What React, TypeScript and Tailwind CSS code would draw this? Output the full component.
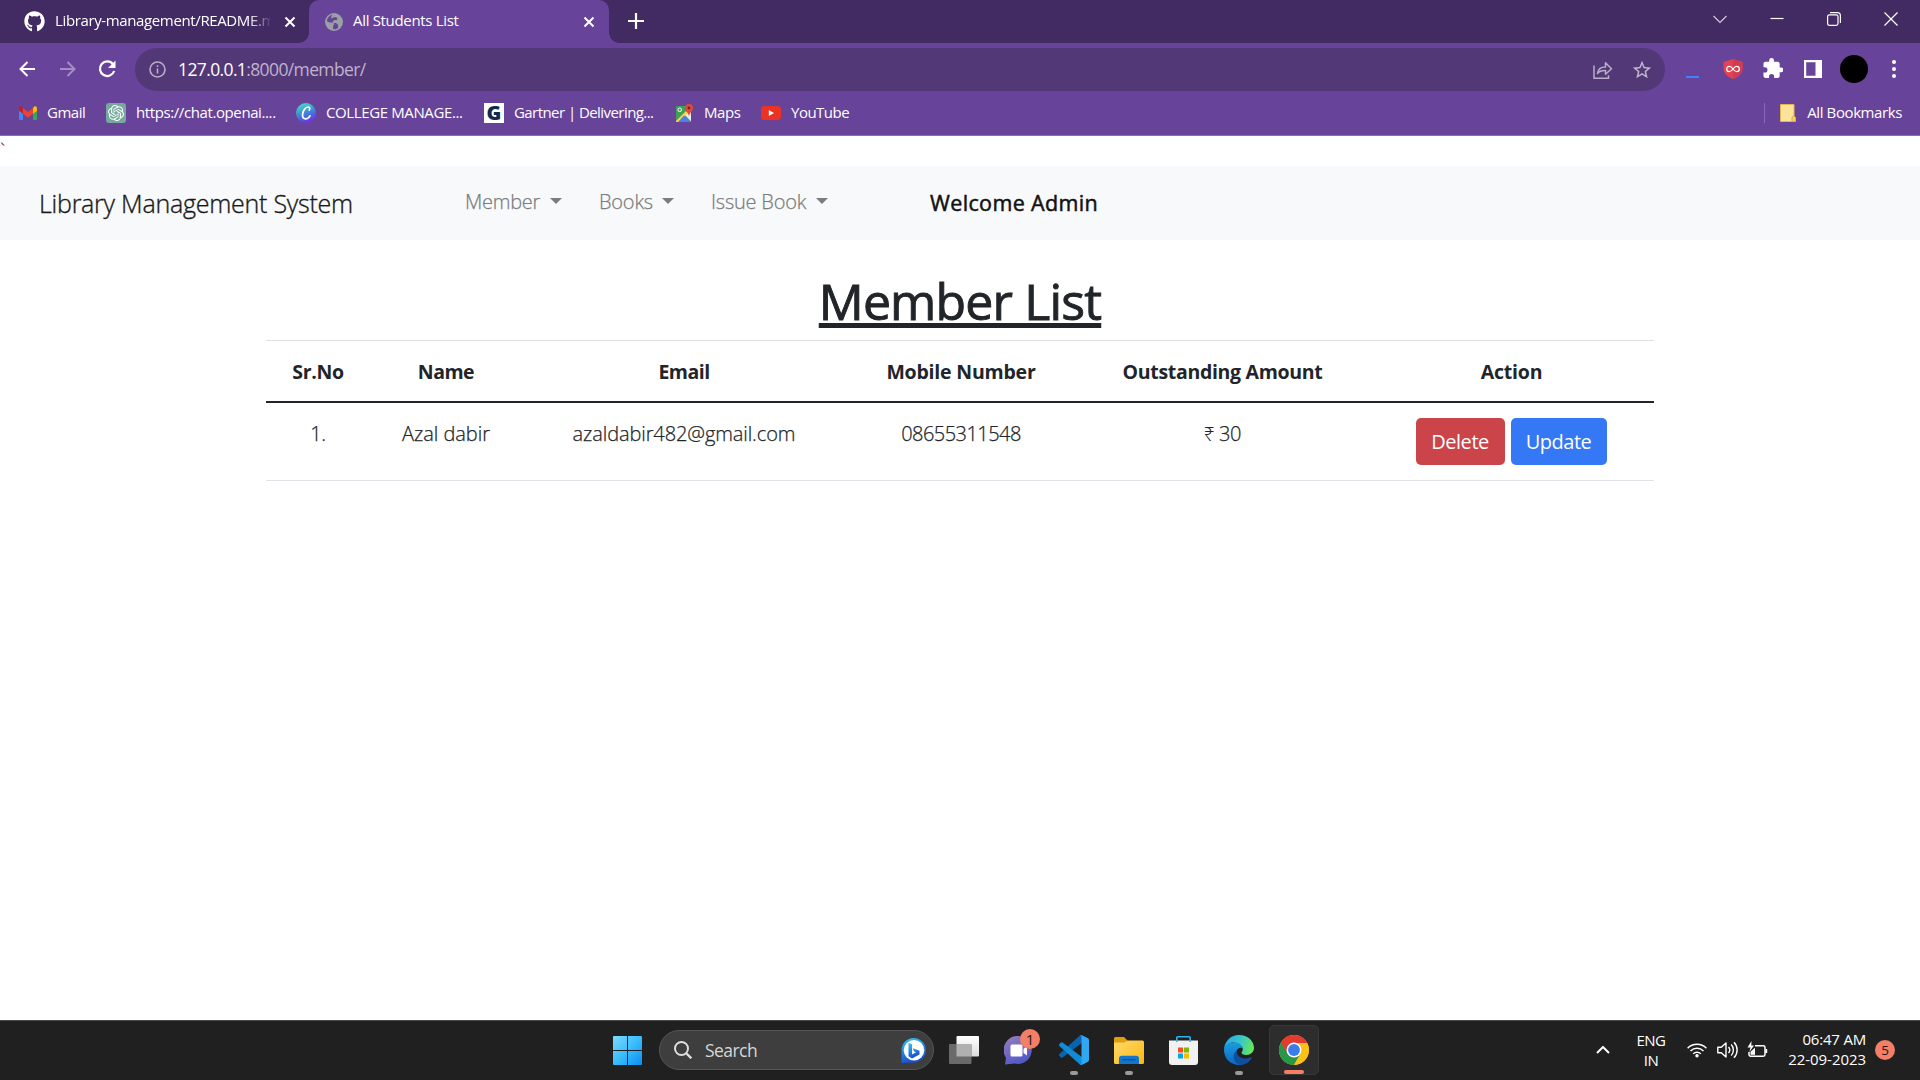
import React from "react";
import { FaGithub } from "react-icons/fa";
import { SiOpenai } from "react-icons/si";

function CloseX({ className = "" }: { className?: string }) {
  return (
    <svg viewBox="0 0 12 12" className={`h-3 w-3 shrink-0 ${className}`} fill="none" stroke="#fff" strokeWidth="2">
      <path d="M1.5 1.5l9 9M10.5 1.5l-9 9" />
    </svg>
  );
}

function TabStrip() {
  return (
    <div className="flex h-[43px] bg-[#422a63]">
      <div className="flex h-[43px] w-[309px] items-center rounded-br-[10px] pl-6">
        <FaGithub className="h-[21px] w-[21px] shrink-0 text-white" />
        <div className="ml-[10px] w-[215px] whitespace-nowrap pb-[3px] text-[15px] leading-[40px] tracking-[-0.37px] text-white [mask-image:linear-gradient(to_right,black_90%,transparent_101%)]">
          Library-management/README.m
        </div>
        <CloseX className="ml-[14px]" />
      </div>
      <div className="relative flex h-[43px] w-[300px] items-center rounded-t-[10px] bg-[#68439a] pl-4">
        <span className="absolute -left-[10px] bottom-0 h-[10px] w-[10px] bg-[radial-gradient(circle_at_0_0,#422a63_9.5px,#68439a_10px)]" />
        <span className="absolute -right-[10px] bottom-0 h-[10px] w-[10px] bg-[radial-gradient(circle_at_100%_0,#422a63_9.5px,#68439a_10px)]" />
        <svg viewBox="0 0 18 18" className="h-[18px] w-[18px]">
          <circle cx="9" cy="9" r="9" fill="#9aa0a6" />
          <path
            d="M7.5 1.8c-3 .7-5.4 3-5.6 6.4l2.6 1.2h3.2l1.8 1.7-1.4 1.5v3.5c2 .3 3.7-.2 5.200-1.400l-.4-3.300-2-1.500h-2.200l-1-1.200 1.500-1.700 2.200.2 1.100-1.500-.700-1.300-2.400-.4-2.700 1.500L6 4.300z"
            fill="#68439a"
          />
        </svg>
        <span className="ml-[10px] w-[225px] pb-[3px] text-[15px] leading-[40px] tracking-[-0.32px] text-white">All Students List</span>
        <CloseX className="ml-[5px]" />
      </div>
      <svg viewBox="0 0 16 16" className="ml-[19px] mt-[13px] h-4 w-4" stroke="#fff" strokeWidth="2.2">
        <path d="M8 0v16M0 8h16" />
      </svg>
      <div className="ml-auto mr-[22px] flex h-[37px] items-center gap-[43px]">
        <svg viewBox="0 0 14 14" className="h-[14px] w-[14px]" fill="none" stroke="#d6cfe0" strokeWidth="1.1">
          <path d="M.5 4L7 10.500 13.500 4" />
        </svg>
        <svg viewBox="0 0 14 14" className="h-[14px] w-[14px]" stroke="#fff" strokeWidth="1.200">
          <path d="M.5 6.500h13" />
        </svg>
        <svg viewBox="0 0 14 14" className="h-[14px] w-[14px]" fill="none" stroke="#fff" strokeWidth="1.200">
          <rect x=".6" y="2.900" width="10.400" height="10.400" rx="1.800" />
          <path d="M3 .6h7.400a3 3 0 0 1 3 3V11" />
        </svg>
        <svg viewBox="0 0 14 14" className="h-[14px] w-[14px]" fill="none" stroke="#fff" strokeWidth="1.200">
          <path d="M.5.5l13 13M13.500.5l-13 13" />
        </svg>
      </div>
    </div>
  );
}

function Toolbar() {
  return (
    <div className="flex h-[53px] items-center pl-[19px]">
      <svg viewBox="0 0 16 16" className="mb-[2px] h-4 w-4" fill="none" stroke="#fff" strokeWidth="2">
        <path d="M16 8H1.500M8.500 1L1.500 8l7 7" />
      </svg>
      <svg viewBox="0 0 16 16" className="mb-[2px] ml-[25px] h-4 w-4" fill="none" stroke="#a48dc4" strokeWidth="2">
        <path d="M0 8h14.500M7.500 1l7 7-7 7" />
      </svg>
      <svg viewBox="0 0 18 18" className="mb-[2px] ml-[22px] h-[18px] w-[18px]">
        <path d="M15 4.200A7.300 7.300 0 1 0 16.200 11" fill="none" stroke="#fff" strokeWidth="2.200" />
        <path d="M17.500 0.500v7.500H10z" fill="#fff" />
      </svg>
      <div className="ml-[19px] flex h-[43px] w-[1530px] items-center rounded-full bg-[#533877] pl-[14px] pr-[12px]">
        <svg viewBox="0 0 17 17" className="h-[17px] w-[17px]" fill="none" stroke="#b9adc8" strokeWidth="1.600">
          <circle cx="8.500" cy="8.500" r="7.500" />
          <path d="M8.500 7.600v5M8.500 4.300v1.800" />
        </svg>
        <span className="ml-[12px] text-[17.5px] leading-[43px] tracking-[-0.62px] text-[#bfb2cd]">
          <span className="text-white">127.0.0.1</span>:8000/member/
        </span>
        <svg viewBox="0 0 20 18" className="ml-auto h-[18px] w-5" fill="none" stroke="#b9adc8" strokeWidth="1.500">
          <path d="M1 4.500v12.700h14.500v-3" />
          <path d="M4.500 12.500c.5-4.500 3.500-6.500 8-6.500V1.700l6 6-6 5.600V9.500c-3.500-.2-6 .6-8 3z" strokeLinejoin="round" />
        </svg>
        <svg viewBox="0 0 24 24" className="ml-[18px] h-[22px] w-[22px]" fill="#c3b9cf">
          <path d="M22 9.240l-7.190-.62L12 2 9.190 8.630 2 9.240l5.460 4.730L5.820 21 12 17.270 18.180 21l-1.630-7.030L22 9.240zM12 15.400l-3.760 2.270 1-4.280-3.320-2.880 4.380-.38L12 6.100l1.710 4.040 4.380.38-3.320 2.880 1 4.280L12 15.400z" />
        </svg>
      </div>
      <span className="ml-[21px] mt-[15px] h-[2px] w-[13px] bg-[#3f83f8]" />
      <svg viewBox="0 0 20 20" className="mb-[2px] ml-[24px] h-5 w-5">
        <path d="M10 0l9.500 3v6.500c0 5-4.500 8.800-9.500 10.500C5 18.300.5 14.500.5 9.500V3z" fill="#e04352" />
        <path d="M10 0l9.500 3v6.500c0 5-4.500 8.800-9.500 10.500z" fill="#cf3d4f" />
        <path d="M10 10C8.800 8.200 7.600 7.400 6.300 7.400a2.600 2.600 0 0 0 0 5.200c1.300 0 2.500-.8 3.700-2.600s2.400-2.600 3.700-2.600a2.600 2.600 0 0 1 0 5.200c-1.300 0-2.500-.8-3.700-2.600z" fill="none" stroke="#fff" strokeWidth="1.200" />
      </svg>
      <svg viewBox="1.500 1 21 21" className="mb-[3px] ml-[20px] h-[20px] w-[20px]" fill="#fff">
        <path d="M20.500 11H19V7c0-1.100-.9-2-2-2h-4V3.500a2.500 2.500 0 0 0-5 0V5H4c-1.100 0-1.990.9-1.990 2v3.800H3.500a2.700 2.700 0 0 1 0 5.400H2V20c0 1.100.9 2 2 2h3.800v-1.500a2.700 2.700 0 0 1 5.400 0V22H17c1.100 0 2-.9 2-2v-4h1.500a2.500 2.500 0 0 0 0-5z" />
      </svg>
      <svg viewBox="0 0 18 18" className="mb-[1px] ml-[21px] h-[18px] w-[18px]">
        <path fillRule="evenodd" d="M0 0h18v18H0zM2.200 2.200v13.600H11.500V2.200z" fill="#fff" />
      </svg>
      <span className="mb-[1px] ml-[18px] h-7 w-7 rounded-full bg-black" />
      <svg viewBox="0 0 4 18" className="mb-[2px] ml-[23.5px] h-[18px] w-1" fill="#fff">
        <circle cx="2" cy="2" r="2" />
        <circle cx="2" cy="9" r="2" />
        <circle cx="2" cy="16" r="2" />
      </svg>
    </div>
  );
}

function Bookmark({ icon, label, width, spacing }: { icon: React.ReactNode; label: string; width: string; spacing: string }) {
  return (
    <div className={`flex shrink-0 items-center gap-[10px] ${width}`}>
      <span className="flex h-5 w-5 shrink-0 items-center justify-center">{icon}</span>
      <span className={`whitespace-nowrap pb-[2px] text-[15px] leading-[32px] text-white ${spacing}`}>{label}</span>
    </div>
  );
}

function BookmarksBar() {
  return (
    <div className="flex h-[40px] items-start border-b border-[#8b6bb5] pl-[18px]">
      <Bookmark
        width="w-[88px]"
        spacing="-ml-px tracking-[-0.5px]"
        label="Gmail"
        icon={
          <svg viewBox="0 0 18 14" className="h-[14px] w-[18px]">
            <path d="M0 2v11a1 1 0 0 0 1 1h3V5z" fill="#4285f4" />
            <path d="M18 2v11a1 1 0 0 1-1 1h-3V5z" fill="#34a853" />
            <path d="M0 2.200v2.600l4 3V2L3 .8C1.800-.3 0 .5 0 2.200z" fill="#c5221f" />
            <path d="M18 2.200v2.600l-4 3V2l1-1.200c1.200-1.100 3-.3 3 1.400z" fill="#fbbc04" />
            <path d="M4 2v5.800l5 3.900 5-3.900V2L9 6z" fill="#ea4335" />
          </svg>
        }
      />
      <Bookmark
        width="w-[190px]"
        spacing="tracking-[-0.4px]"
        label="https://chat.openai...."
        icon={
          <span className="flex h-5 w-5 items-center justify-center rounded-[3px] bg-[#75a99c]">
            <SiOpenai className="h-4 w-4 text-white" />
          </span>
        }
      />
      <Bookmark
        width="w-[188px]"
        spacing="tracking-[-0.38px]"
        label="COLLEGE MANAGE..."
        icon={
          <span className="flex h-5 w-5 items-center justify-center rounded-full bg-[linear-gradient(160deg,#45cfc4_15%,#3f86d8_50%,#6a2be8_90%)]">
            <svg viewBox="0 0 20 20" className="h-5 w-5" fill="none" stroke="#fff" strokeLinecap="round">
              <path d="M13.300 7.200c.8-1.700.6-3.200-1-3.200-2.900 0-5.800 4.200-5.800 8 0 2.400 1.200 3.800 3 3.800 1.900 0 3.500-1.200 4.500-3" strokeWidth="1.700" />
            </svg>
          </span>
        }
      />
      <Bookmark
        width="w-[191px]"
        spacing="tracking-[-0.56px]"
        label="Gartner | Delivering..."
        icon={
          <span className="flex h-5 w-5 items-center justify-center bg-white font-['Open_Sans'] text-[20px] font-extrabold leading-none text-[#12284c]">
            G
          </span>
        }
      />
      <Bookmark
        width="-ml-px w-[87px]"
        spacing="tracking-[-0.4px]"
        label="Maps"
        icon={
          <svg viewBox="0 0 18 18" className="h-[18px] w-[18px]">
            <rect x="1" y="2" width="15" height="16" rx="1" fill="#3f9e57" />
            <path d="M9 10l7-5v12.500L9 10z" fill="#e8eaed" />
            <path d="M1 17L11 7l2 2-9 9H1z" fill="#fbd34d" />
            <path d="M3 18l6-6.500L15.500 18z" fill="#4a80f0" />
            <circle cx="4.700" cy="5.800" r="1.800" fill="none" stroke="#fff" strokeWidth="1" />
            <path d="M14 0a4 4 0 0 0-4 4c0 3 3 4 4 8 1-4 4-5 4-8a4 4 0 0 0-4-4z" fill="#dd4b3e" />
            <circle cx="14" cy="4" r="1.400" fill="#7b231e" />
          </svg>
        }
      />
      <Bookmark
        width="w-[120px]"
        spacing="tracking-[-0.5px]"
        label="YouTube"
        icon={
          <svg viewBox="0 0 20 14" className="h-[14px] w-5">
            <rect width="20" height="14" rx="3.500" fill="#ea3323" />
            <path d="M7.800 4v6l5.200-3z" fill="#fff" />
          </svg>
        }
      />
      <div className="ml-auto mr-[18px] flex h-[34px] items-center">
        <span className="h-5 w-px bg-[#8b6bb5]" />
        <svg viewBox="0 0 16 18" className="ml-[15px] h-[18px] w-4">
          <path d="M.5.5h13.500v11.500l1.500 1.500v4H.5z" fill="#fbe39a" stroke="#e0b94e" />
          <path d="M12 17.500v-4.500l1.500-1.200 2 1.700v4z" fill="#f5d06a" stroke="#d9ae3c" />
        </svg>
        <span className="ml-[11px] pb-[2px] text-[15px] leading-[32px] tracking-[-0.4px] text-white">All Bookmarks</span>
      </div>
    </div>
  );
}

function NavItem({ label, spacing, className }: { label: string; spacing: string; className: string }) {
  return (
    <div className={`flex items-center text-[20px] font-light leading-[30px] text-[#7b7c7d] [-webkit-text-stroke:0.25px] ${className}`}>
      <span className={`whitespace-nowrap ${spacing}`}>{label}</span>
      <span className="mb-[3px] ml-auto border-x-[6px] border-t-[6px] border-x-transparent border-t-[#7b7c7d]" />
    </div>
  );
}

function Navbar() {
  return (
    <nav className="flex h-[74px] bg-[#f8f9fa] pl-[39px]">
      <span className="mt-[19px] w-[426px] text-[25px] font-light leading-[37px] tracking-[-0.24px] text-[#181818] [-webkit-text-stroke:0.35px]">
        Library Management System
      </span>
      <NavItem label="Member" spacing="tracking-[-0.25px]" className="mt-[21px] h-[30px] w-[97px]" />
      <NavItem label="Books" spacing="tracking-[-0.2px]" className="ml-[37px] mt-[21px] h-[30px] w-[75px]" />
      <NavItem label="Issue Book" spacing="tracking-[-0.22px]" className="ml-[37px] mt-[21px] h-[30px] w-[117px]" />
      <span className="ml-[102px] mt-[21px] text-[21.5px] leading-[32px] tracking-[0.36px] text-[#121212] [-webkit-text-stroke:0.5px]">
        Welcome Admin
      </span>
    </nav>
  );
}

const headers = [
  { label: "Sr.No", spacing: "tracking-[-0.35px]" },
  { label: "Name", spacing: "tracking-[-0.5px]" },
  { label: "Email", spacing: "tracking-[-0.5px]" },
  { label: "Mobile Number", spacing: "tracking-[-0.2px]" },
  { label: "Outstanding Amount", spacing: "tracking-[-0.32px]" },
  { label: "Action", spacing: "tracking-[-0.2px]" },
];

function MemberTable() {
  return (
    <table className="w-[1388px] table-fixed border-separate border-spacing-0 text-center text-[20px] leading-[30px] text-[#212529]">
      <colgroup>
        <col className="w-[104px]" />
        <col className="w-[152px]" />
        <col className="w-[324px]" />
        <col className="w-[230px]" />
        <col className="w-[293px]" />
        <col className="w-[285px]" />
      </colgroup>
      <thead>
        <tr>
          {headers.map((h) => (
            <th key={h.label} className={`border-t border-b-2 border-t-[#dee2e6] border-b-[#212529] pb-[14px] pt-[16px] text-[19.5px] font-bold ${h.spacing}`}>
              {h.label}
            </th>
          ))}
        </tr>
      </thead>
      <tbody className="font-light [&>tr>td]:border-b [&>tr>td]:border-[#dee2e6] [&>tr>td]:pt-[16px] [&>tr>td]:align-top [-webkit-text-stroke:0.25px]">
        <tr>
          <td className="tracking-[-0.4px]">1.</td>
          <td className="tracking-[-0.05px]">Azal dabir</td>
          <td className="tracking-[-0.1px]">azaldabir482@gmail.com</td>
          <td className="tracking-[-0.55px]">08655311548</td>
          <td className="tracking-[-0.4px]">
            <span className="font-['Noto_Sans'] text-[19px] font-light [-webkit-text-stroke:0]">₹</span> 30
          </td>
          <td>
            <div className="-mt-px mb-[15px] flex justify-center gap-[6px] pr-[1px] font-normal text-white [-webkit-text-stroke:0]">
              <button className="h-[47px] w-[89px] rounded-[5px] bg-[#cb444a] tracking-[-0.45px]">Delete</button>
              <button className="h-[47px] w-[96px] rounded-[5px] bg-[#3478f6] tracking-[-0.5px]">Update</button>
            </div>
          </td>
        </tr>
      </tbody>
    </table>
  );
}

function AppSlot({ children, indicator = false }: { children: React.ReactNode; indicator?: boolean }) {
  return (
    <div className="relative flex h-[60px] w-[55px] items-center justify-center">
      {children}
      {indicator && <span className="absolute bottom-[5px] h-1 w-2 rounded-full bg-[#9a9a9a]" />}
    </div>
  );
}

function Taskbar() {
  return (
    <footer className="flex h-[60px] items-center border-t border-[#4a4a4a] bg-[#202020] pb-[1px] font-['Open_Sans',sans-serif] text-white">
      <svg viewBox="0 0 29 29" className="ml-[613px] h-[29px] w-[29px]">
        <defs>
          <linearGradient id="win" x1="0" y1="0" x2="1" y2="1">
            <stop offset="0" stopColor="#7ddcff" />
            <stop offset=".5" stopColor="#39bdfb" />
            <stop offset="1" stopColor="#0a8df3" />
          </linearGradient>
        </defs>
        <path d="M1 0h13v14H0V1a1 1 0 0 1 1-1zM15 0h13a1 1 0 0 1 1 1v13H15zM0 15h14v14H1a1 1 0 0 1-1-1zM15 15h14v13a1 1 0 0 1-1 1H15z" fill="url(#win)" />
      </svg>
      <div className="ml-[17px] flex h-10 w-[275px] items-center rounded-full border border-[#555] bg-[#3e3e3e] pl-[14px] pr-[7px]">
        <svg viewBox="0 0 18 18" className="h-[18px] w-[18px]" fill="none" stroke="#dedede" strokeWidth="2">
          <circle cx="7.500" cy="7.500" r="6.500" />
          <path d="M12 12l5.300 5.300" strokeWidth="2.400" />
        </svg>
        <span className="ml-[13px] text-[17.5px] leading-[38px] tracking-[-0.55px] text-[#d6d6d6]">Search</span>
        <svg viewBox="0 0 25 25" className="ml-auto h-[25px] w-[25px]">
          <defs>
            <linearGradient id="bing" x1="0" y1="0" x2=".3" y2="1">
              <stop offset="0" stopColor="#2fc7ee" />
              <stop offset="1" stopColor="#1b4fd0" />
            </linearGradient>
          </defs>
          <path d="M12.500 0a12.300 12.300 0 1 1-1.500 24.500L.5 25V12A12.300 12.300 0 0 1 12.500 0z" fill="url(#bing)" />
          <circle cx="13" cy="12.300" r="10.300" fill="#fff" />
          <path d="M7.500 5l3.500 1.200v10.300l4-2.200-2-1-1.200-3 6.700 2.400v3.800L11 20.500 7.500 18.300z" fill="url(#bing)" />
        </svg>
      </div>
      <div className="ml-[2.500px] flex">
        <AppSlot>
          <svg viewBox="0 0 30 28" className="h-7 w-[30px]">
            <defs>
              <linearGradient id="tv" x1="0" y1="0" x2="0" y2="1">
                <stop offset="0" stopColor="#fff" />
                <stop offset="1" stopColor="#dcdcdc" />
              </linearGradient>
            </defs>
            <rect x="7.500" y="0" width="22.500" height="20.500" rx="1" fill="url(#tv)" />
            <rect x="0" y="8" width="22.500" height="20" rx="1" fill="#6a6a6a" />
            <path d="M7.500 8h15v12.500h-15z" fill="#b0b0b0" />
          </svg>
        </AppSlot>
        <AppSlot>
          <svg viewBox="0 0 29 29" className="mr-px h-[29px] w-[29px]">
            <defs>
              <linearGradient id="chat" x1="0" y1="0" x2=".5" y2="1">
                <stop offset="0" stopColor="#9a7dbb" />
                <stop offset="1" stopColor="#5059c9" />
              </linearGradient>
            </defs>
            <path d="M14.500 0a14 14 0 1 1-4 27.600L1 28.500l1-6.800A14 14 0 0 1 14.500 0z" fill="url(#chat)" />
            <rect x="6.500" y="8.500" width="12" height="12" rx="1.500" fill="#fff" />
            <path d="M19.500 13l3.500-3.500v10L19.500 17z" fill="#fff" />
          </svg>
          <span className="absolute left-[28.500px] top-[9px] flex h-5 w-5 items-center justify-center rounded-full bg-[#f47e66] text-[15px] leading-5 text-[#1c1c1c]">1</span>
        </AppSlot>
        <AppSlot indicator>
          <svg viewBox="0 0 100 100" className="h-[30px] w-[30px]">
            <path d="M96.500 10.800L75.900.9a6.200 6.200 0 0 0-7.100 1.200L1.300 63.500a4.200 4.200 0 0 0 0 6.200l5.500 5a4.200 4.200 0 0 0 5.300.2L75 27.300z" fill="#0a64ad" />
            <path d="M96.500 89.200L75.900 99.100a6.200 6.200 0 0 1-7.100-1.200L1.300 36.500a4.200 4.200 0 0 1 0-6.200l5.500-5a4.200 4.200 0 0 1 5.300-.2L75 72.700z" fill="#118bd5" />
            <path d="M75.900 99.100a6.200 6.200 0 0 1-7.100-1.200c2.300 2.300 6.200.7 6.200-2.600V4.700c0-3.300-3.900-4.900-6.200-2.600A6.200 6.200 0 0 1 75.900.9l20.600 9.900a6.200 6.200 0 0 1 3.500 5.600v67.200a6.200 6.200 0 0 1-3.500 5.600z" fill="#2fa8f1" />
          </svg>
        </AppSlot>
        <AppSlot indicator>
          <svg viewBox="0 0 30 27" className="h-[27px] w-[30px]">
            <defs>
              <linearGradient id="fold" x1="0" y1="0" x2="1" y2="1">
                <stop offset="0" stopColor="#ffd96c" />
                <stop offset="1" stopColor="#fbb813" />
              </linearGradient>
            </defs>
            <path d="M0 1.500A1.500 1.500 0 0 1 1.500 0H10l3.500 3.500L10 9H0z" fill="#e09d0c" />
            <path d="M0 5.500h10.500L13.500 3.500h15A1.500 1.500 0 0 1 30 5v20.500a1.500 1.500 0 0 1-1.500 1.500h-27A1.500 1.500 0 0 1 0 25.500z" fill="url(#fold)" />
            <path d="M5 27v-5.500A2.800 2.800 0 0 1 7.800 18.700h14.400a2.800 2.800 0 0 1 2.800 2.800V27z" fill="#1177ce" />
            <path d="M8.500 22.700h13" stroke="#0b4d8f" strokeWidth="1.300" />
          </svg>
        </AppSlot>
        <AppSlot>
          <svg viewBox="0 0 29 29" className="mr-px h-[29px] w-[29px]">
            <path d="M0 4.500h29V26a3 3 0 0 1-3 3H3a3 3 0 0 1-3-3z" fill="#f1f1f1" />
            <path d="M7.800 6V1.800A1 1 0 0 1 8.800.8h11.400a1 1 0 0 1 1 1V6" fill="none" stroke="#31b4ee" strokeWidth="1.600" />
            <path d="M9 11.500h5v5H9z" fill="#f25022" />
            <path d="M15 11.500h5v5h-5z" fill="#7fba00" />
            <path d="M9 17.500h5v5H9z" fill="#00a4ef" />
            <path d="M15 17.500h5v5h-5z" fill="#ffb900" />
          </svg>
        </AppSlot>
        <AppSlot indicator>
          <svg viewBox="0 0 30 30" className="h-[30px] w-[30px]">
            <defs>
              <linearGradient id="edgeTop" x1="0" y1=".4" x2="1" y2=".6">
                <stop offset="0" stopColor="#2aa9e6" />
                <stop offset=".5" stopColor="#35c6cf" />
                <stop offset="1" stopColor="#6be84f" />
              </linearGradient>
              <linearGradient id="edgeLeft" x1="0" y1="0" x2="0" y2="1">
                <stop offset="0" stopColor="#1b9de0" />
                <stop offset="1" stopColor="#0967c4" />
              </linearGradient>
            </defs>
            <path d="M0 14.500C.5 6 7 0 15 0c8.800 0 15 6 15 12.800 0 4.500-3.500 7.200-7.500 7.200-3.500 0-5-1.200-5-2.200 0-.8 1.300-1.500 1.300-3.600C18.800 10.500 14 7.500 9.500 7.500 5 7.500 1.500 10 0 14.500z" fill="url(#edgeTop)" />
            <path d="M0 15c0-4.500 4-7.500 9.300-7.500 4.700 0 9 2.500 9.400 6-1-1.800-6.500-1-6.500 4.500 0 6 5.500 9.800 11.300 8.800C21 29 18 30 15 30 6.500 30 0 23.500 0 15z" fill="url(#edgeLeft)" />
            <path d="M12.500 15.500c-5 3.500-3.500 12 3.500 14.400 5.500 0 9.500-3 11.800-6.900.3-.6-.2-1-.8-.7-7 3.200-14.500 0-14.500-6.800z" fill="#104fa0" />
          </svg>
        </AppSlot>
        <div className="relative ml-[2.500px] flex h-[50px] w-[50px] items-center justify-center self-center rounded-[5px] border border-[#383838] bg-[#2d2d2d]">
          <svg viewBox="0 0 48 48" className="h-[30px] w-[30px]">
            <circle cx="24" cy="24" r="24" fill="#fbc116" />
            <path d="M24 24L3.200 12A24 24 0 0 0 24 48l10.400-18z" fill="#279847" />
            <path d="M24 13h21.300A24 24 0 0 0 3.200 12L13.600 30z" fill="#e33b2e" />
            <path d="M34.400 30L24 48A24 24 0 0 0 45.300 13H24z" fill="#fbc116" />
            <circle cx="24" cy="24" r="12" fill="#fff" />
            <circle cx="24" cy="24" r="9.500" fill="#3a7cec" />
          </svg>
          <span className="absolute bottom-0 h-1 w-5 rounded-full bg-[#f47e66]" />
        </div>
      </div>
      <svg viewBox="0 0 14 8" className="ml-auto h-2 w-[14px]" fill="none" stroke="#fff" strokeWidth="2">
        <path d="M1 7l6-6 6 6" />
      </svg>
      <div className="ml-[26px] w-[30px] whitespace-nowrap pb-[1px] text-center text-[15px] leading-5 tracking-[-0.5px]">
        ENG
        <br />
        IN
      </div>
      <svg viewBox="0 0 20 16" className="ml-[21px] h-4 w-5" fill="none" stroke="#fff" strokeWidth="1.500">
        <path d="M.6 6.200a13.300 13.300 0 0 1 18.800 0M3.500 9a9.300 9.300 0 0 1 13 0M6.200 11.700a5.500 5.500 0 0 1 7.600 0" />
        <circle cx="10" cy="13.800" r="1.700" fill="#fff" stroke="none" />
      </svg>
      <svg viewBox="0 0 21 18" className="ml-[10px] h-[18px] w-[21px]" fill="none" stroke="#fff" strokeWidth="1.400">
        <path d="M.8 6.300h3.500L9 2v14l-4.700-4.300H.8z" strokeLinejoin="round" />
        <path d="M11.500 6a4.500 4.500 0 0 1 0 6M14.200 3.500a8 8 0 0 1 0 11M17 1.200a11.300 11.300 0 0 1 0 15.600" />
      </svg>
      <svg viewBox="0 0 21 18" className="ml-[9px] h-[18px] w-[21px]">
        <path d="M8 4.700h8.300A1.700 1.700 0 0 1 18 6.400v7.200a1.700 1.700 0 0 1-1.700 1.700H3.700A1.700 1.700 0 0 1 2 13.600V11" fill="none" stroke="#fff" strokeWidth="1.500" />
        <path d="M18.500 8h1.700v4h-1.700zM3.500 13.800v-3L8 6.800v7z" fill="#fff" />
        <path d="M4.500 0L.5 6.500h3L2.300 11 7 4.500H4.300z" fill="#fff" />
      </svg>
      <div className="ml-[17px] w-[81px] whitespace-nowrap pb-[3px] text-right text-[15px] leading-5">
        <div className="tracking-[-0.2px]">06:47 AM</div>
        <div className="tracking-[-0.05px]">22-09-2023</div>
      </div>
      <span className="ml-[9px] mr-[25px] flex h-5 w-5 items-center justify-center rounded-full bg-[#f47e66] text-[13.5px] leading-5 text-[#1c1c1c]">5</span>
    </footer>
  );
}

export default function App() {
  return (
    <div className="flex h-[1080px] w-[1920px] flex-col overflow-hidden bg-white font-['Open_Sans',sans-serif]">
      <header className="h-[136px] bg-[#68439a]">
        <TabStrip />
        <Toolbar />
        <BookmarksBar />
      </header>
      <main className="flex flex-1 flex-col">
        <div className="h-[30px] text-[20px] font-light leading-[30px] text-[#212529]">`</div>
        <Navbar />
        <h1 className="mt-[31px] text-center text-[50px] leading-[60px] tracking-[-0.85px] text-[#212529] [-webkit-text-stroke:0.9px]">
          <span className="underline decoration-[5px] underline-offset-[3px] [text-decoration-skip-ink:none]">Member List</span>
        </h1>
        <div className="mt-[9px] flex justify-center">
          <MemberTable />
        </div>
      </main>
      <Taskbar />
    </div>
  );
}
